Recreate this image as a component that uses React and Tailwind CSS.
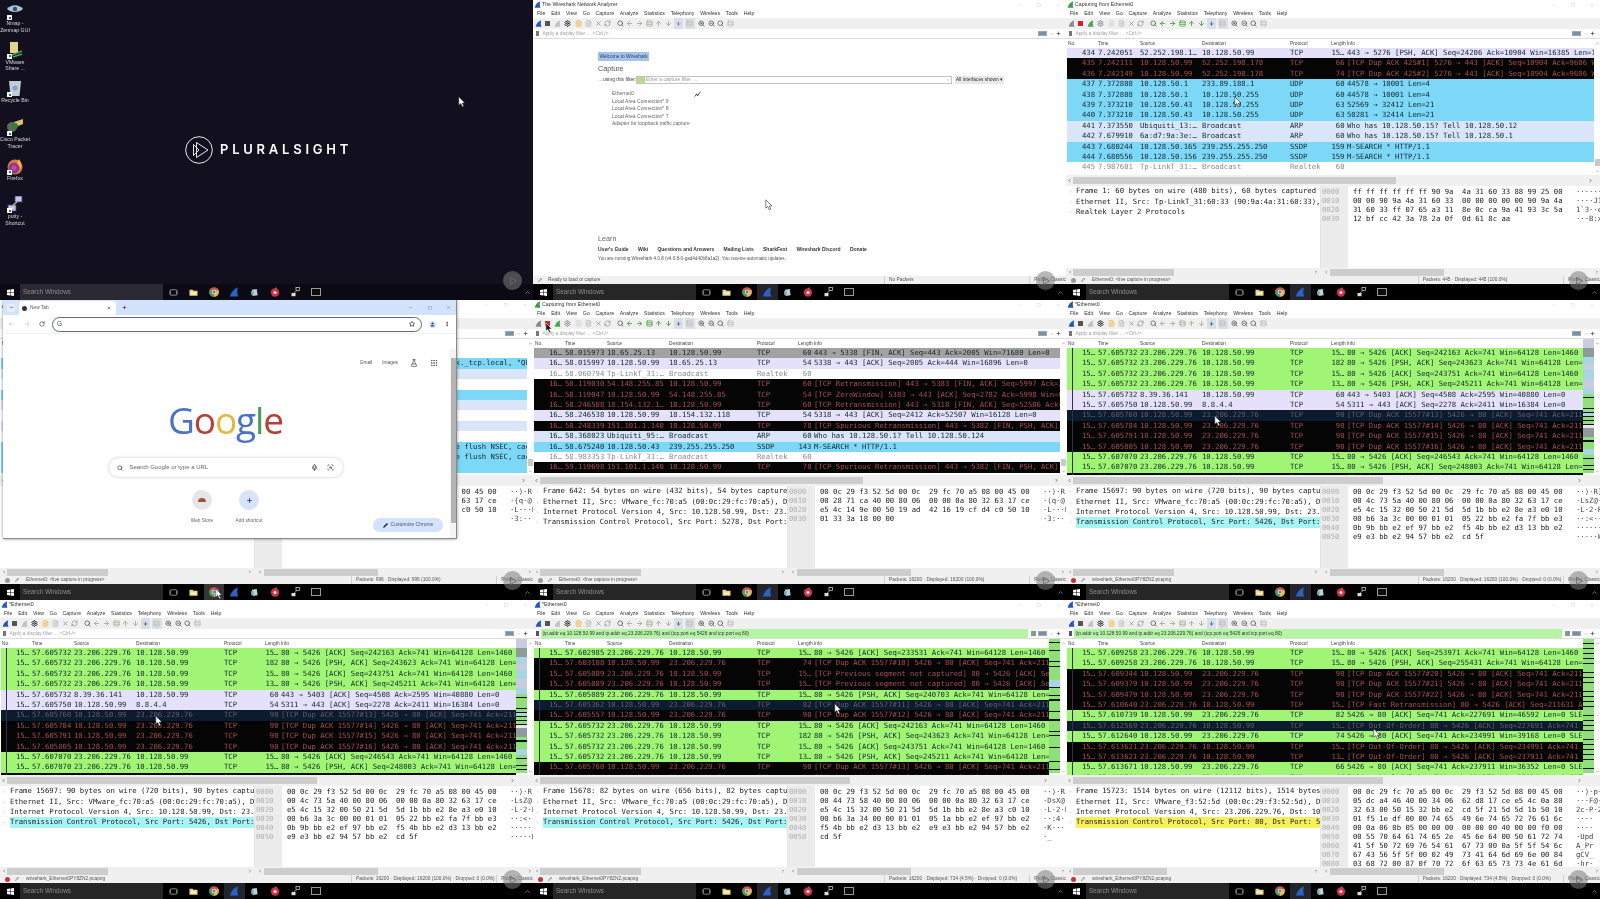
import React from 'react'
import {
  ArrowDown, ArrowLeft, ArrowRight, ArrowUp, ChevronDown, ChevronLeft, ChevronRight, ChevronUp, EllipsisVertical,
  FileText, FlaskConical, Grip, Mic, Minus, Pencil, Plus, RefreshCw, RotateCw, ScanSearch, Search, Settings,
  Square, Star, User, X, ZoomIn, ZoomOut, Rows3,
} from 'lucide-react'

const sans = "font-['Liberation_Sans',sans-serif]"
const mono = "font-['DejaVu_Sans_Mono',monospace]"

const rowStyles = {
  g: 'bg-[#a0f575] text-[#12272e]',
  k: 'bg-[#050505] text-[#a34f4f]',
  n: 'bg-[#0c1b2e] text-[#5f5f68]',
  t: 'bg-[#e5e1fa] text-[#12272e]',
  b: 'bg-[#7dd8f7] text-[#12272e]',
  a: 'bg-[#d9e5f9] text-[#12272e]',
  w: 'bg-white text-[#8a8a8a]',
  s: 'bg-[#a2a2a2] text-[#12272e]',
}

const mapStyles = {
  g: 'flex-1 bg-[#8fe07a]', k: 'h-px shrink-0 bg-[#101010]', l: 'flex-1 bg-[#c8cce0]', b: 'flex-1 bg-[#a9d4e4]', s: 'flex-1 bg-[#8f9a9a]', w: 'flex-1 bg-[#e6e6ee]',
}

const srv = '23.206.229.76'
const me = '10.128.50.99'

const liveRows = [
  ['434', '7.242051', '52.252.198.1…', me, 'TCP', '15…', '443 → 5276 [PSH, ACK] Seq=24206 Ack=10904 Win=16385 Len=1', 't'],
  ['435', '7.242111', me, '52.252.198.178', 'TCP', '66', '[TCP Dup ACK 425#1] 5276 → 443 [ACK] Seq=10904 Ack=9606 W', 'k'],
  ['436', '7.242149', me, '52.252.198.178', 'TCP', '74', '[TCP Dup ACK 425#2] 5276 → 443 [ACK] Seq=10904 Ack=9606 W', 'k'],
  ['437', '7.372808', '10.128.50.1', '233.89.188.1', 'UDP', '60', '44578 → 10001 Len=4', 'b'],
  ['438', '7.372808', '10.128.50.1', '10.128.50.255', 'UDP', '60', '44578 → 10001 Len=4', 'b'],
  ['439', '7.373210', '10.128.50.43', '10.128.50.255', 'UDP', '63', '52569 → 32412 Len=21', 'b'],
  ['440', '7.373210', '10.128.50.43', '10.128.50.255', 'UDP', '63', '50281 → 32414 Len=21', 'b'],
  ['441', '7.373550', 'Ubiquiti_13:…', 'Broadcast', 'ARP', '60', 'Who has 10.128.50.15? Tell 10.128.50.12', 'a'],
  ['442', '7.679910', '6a:d7:9a:3e:…', 'Broadcast', 'ARP', '60', 'Who has 10.128.50.15? Tell 10.128.50.1', 'a'],
  ['443', '7.680244', '10.128.50.165', '239.255.255.250', 'SSDP', '159', 'M-SEARCH * HTTP/1.1', 'b'],
  ['444', '7.680556', '10.128.50.156', '239.255.255.250', 'SSDP', '159', 'M-SEARCH * HTTP/1.1', 'b'],
  ['445', '7.987601', 'Tp-LinkT_31:…', 'Broadcast', 'Realtek', '60', '', 'w'],
]

const q = 'Standard query 0x0000 PTR _companion-link._tcp.local, "QU" question'
const r = 'Standard query response 0x0000 PTR, cache flush NSEC, cache flush A'
const behindRows = [
  ['98', '7.1', '', '', 'MDNS', '60', '', 'w'], ['99', '7.1', '', '', 'MDNS', '99', q, 'b'], ['10', '7.2', '', '', 'ARP', '60', '', 'a'],
  ['10', '7.2', '', '', 'TCP', '60', '', 'w'], ['10', '7.3', '', '', 'UDP', '63', '', 'b'], ['10', '7.4', '', '', 'ARP', '60', '', 'a'],
  ['10', '7.4', '', '', 'TCP', '60', '', 'w'], ['10', '7.5', '', '', 'ARP', '60', '', 'a'], ['10', '7.6', '', '', 'TCP', '54', '', 'w'],
  ['10', '7.7', '', '', 'MDNS', '90', r, 'b'], ['10', '7.8', '', '', 'MDNS', '90', r, 'b'], ['10', '7.9', '', '', 'MDNS', '90', '', 'b'],
]

const stopRows = [
  ['16…', '58.015973', '18.65.25.13', me, 'TCP', '60', '443 → 5338 [FIN, ACK] Seq=443 Ack=2005 Win=71680 Len=0', 's'],
  ['16…', '58.015997', me, '18.65.25.13', 'TCP', '54', '5338 → 443 [ACK] Seq=2005 Ack=444 Win=16896 Len=0', 't'],
  ['16…', '58.060794', 'Tp-LinkT_31:…', 'Broadcast', 'Realtek', '60', '', 'w'],
  ['16…', '58.119030', '54.148.255.85', me, 'TCP', '60', '[TCP Retransmission] 443 → 5383 [FIN, ACK] Seq=5997 Ack=2', 'k'],
  ['16…', '58.119047', me, '54.148.255.85', 'TCP', '54', '[TCP ZeroWindow] 5383 → 443 [ACK] Seq=2782 Ack=5998 Win=0', 'k'],
  ['16…', '58.246508', '18.154.132.1…', me, 'TCP', '60', '[TCP Retransmission] 443 → 5318 [FIN, ACK] Seq=52506 Ack=', 'k'],
  ['16…', '58.246538', me, '18.154.132.118', 'TCP', '54', '5318 → 443 [ACK] Seq=2412 Ack=52507 Win=16128 Len=0', 't'],
  ['16…', '58.248339', '151.101.1.140', me, 'TCP', '78', '[TCP Spurious Retransmission] 443 → 5382 [FIN, PSH, ACK]', 'k'],
  ['16…', '58.368023', 'Ubiquiti_95:…', 'Broadcast', 'ARP', '60', 'Who has 10.128.50.1? Tell 10.128.50.124', 'a'],
  ['16…', '58.675240', '10.128.50.43', '239.255.255.250', 'SSDP', '143', 'M-SEARCH * HTTP/1.1', 'b'],
  ['16…', '58.983353', 'Tp-LinkT_31:…', 'Broadcast', 'Realtek', '60', '', 'w'],
  ['16…', '59.119698', '151.101.1.140', me, 'TCP', '78', '[TCP Spurious Retransmission] 443 → 5382 [FIN, PSH, ACK]', 'k'],
]

const dupRows = [
  ['15…', '57.605732', srv, me, 'TCP', '15…', '80 → 5426 [ACK] Seq=242163 Ack=741 Win=64128 Len=1460', 'g'],
  ['15…', '57.605732', srv, me, 'TCP', '182', '80 → 5426 [PSH, ACK] Seq=243623 Ack=741 Win=64128 Len=128', 'g'],
  ['15…', '57.605732', srv, me, 'TCP', '15…', '80 → 5426 [ACK] Seq=243751 Ack=741 Win=64128 Len=1460', 'g'],
  ['15…', '57.605732', srv, me, 'TCP', '13…', '80 → 5426 [PSH, ACK] Seq=245211 Ack=741 Win=64128 Len=1332', 'g'],
  ['15…', '57.605732', '8.39.36.141', me, 'TCP', '60', '443 → 5403 [ACK] Seq=4508 Ack=2595 Win=40880 Len=0', 't'],
  ['15…', '57.605750', me, '8.8.4.4', 'TCP', '54', '5311 → 443 [ACK] Seq=2278 Ack=2411 Win=16384 Len=0', 't'],
  ['15…', '57.605760', me, srv, 'TCP', '90', '[TCP Dup ACK 15577#13] 5426 → 80 [ACK] Seq=741 Ack=211631', 'n'],
  ['15…', '57.605784', me, srv, 'TCP', '90', '[TCP Dup ACK 15577#14] 5426 → 80 [ACK] Seq=741 Ack=211631', 'k'],
  ['15…', '57.605791', me, srv, 'TCP', '90', '[TCP Dup ACK 15577#15] 5426 → 80 [ACK] Seq=741 Ack=211631', 'k'],
  ['15…', '57.605805', me, srv, 'TCP', '90', '[TCP Dup ACK 15577#16] 5426 → 80 [ACK] Seq=741 Ack=211631', 'k'],
  ['15…', '57.607070', srv, me, 'TCP', '15…', '80 → 5426 [ACK] Seq=246543 Ack=741 Win=64128 Len=1460', 'g'],
  ['15…', '57.607070', srv, me, 'TCP', '15…', '80 → 5426 [PSH, ACK] Seq=248003 Ack=741 Win=64128 Len=1460', 'g'],
  ['15…', '57.607080', me, srv, 'TCP', '90', '[TCP Dup ACK 15577#17] 5426 → 80 [ACK] Seq=741 Ack=211631', 'k'],
]

const filteredRows = [
  ['15…', '57.602985', srv, me, 'TCP', '15…', '80 → 5426 [ACK] Seq=233531 Ack=741 Win=64128 Len=1460', 'g'],
  ['15…', '57.603108', me, srv, 'TCP', '74', '[TCP Dup ACK 15577#10] 5426 → 80 [ACK] Seq=741 Ack=211631', 'k'],
  ['15…', '57.605089', srv, me, 'TCP', '15…', '[TCP Previous segment not captured] 80 → 5426 [ACK] Seq=2', 'k'],
  ['15…', '57.605089', srv, me, 'TCP', '15…', '[TCP Previous segment not captured] 80 → 5426 [ACK] Seq=2', 'k'],
  ['15…', '57.605089', srv, me, 'TCP', '15…', '80 → 5426 [PSH, ACK] Seq=240703 Ack=741 Win=64128 Len=1460', 'g'],
  ['15…', '57.605362', me, srv, 'TCP', '82', '[TCP Dup ACK 15577#11] 5426 → 80 [ACK] Seq=741 Ack=211631', 'n'],
  ['15…', '57.605557', me, srv, 'TCP', '90', '[TCP Dup ACK 15577#12] 5426 → 80 [ACK] Seq=741 Ack=211631', 'k'],
  ['15…', '57.605732', srv, me, 'TCP', '15…', '80 → 5426 [ACK] Seq=242163 Ack=741 Win=64128 Len=1460', 'g'],
  ['15…', '57.605732', srv, me, 'TCP', '182', '80 → 5426 [PSH, ACK] Seq=243623 Ack=741 Win=64128 Len=128', 'g'],
  ['15…', '57.605732', srv, me, 'TCP', '15…', '80 → 5426 [ACK] Seq=243751 Ack=741 Win=64128 Len=1460', 'g'],
  ['15…', '57.605732', srv, me, 'TCP', '13…', '80 → 5426 [PSH, ACK] Seq=245211 Ack=741 Win=64128 Len=1332', 'g'],
  ['15…', '57.605760', me, srv, 'TCP', '90', '[TCP Dup ACK 15577#13] 5426 → 80 [ACK] Seq=741 Ack=211631', 'k'],
  ['15…', '57.605784', me, srv, 'TCP', '90', '[TCP Dup ACK 15577#14] 5426 → 80 [ACK] Seq=741 Ack=211631', 'k'],
]

const oooRows = [
  ['15…', '57.609258', srv, me, 'TCP', '15…', '80 → 5426 [ACK] Seq=253971 Ack=741 Win=64128 Len=1460', 'g'],
  ['15…', '57.609258', srv, me, 'TCP', '15…', '80 → 5426 [PSH, ACK] Seq=255431 Ack=741 Win=64128 Len=1460', 'g'],
  ['15…', '57.609344', me, srv, 'TCP', '90', '[TCP Dup ACK 15577#20] 5426 → 80 [ACK] Seq=741 Ack=211631', 'k'],
  ['15…', '57.609379', me, srv, 'TCP', '90', '[TCP Dup ACK 15577#21] 5426 → 80 [ACK] Seq=741 Ack=211631', 'k'],
  ['15…', '57.609479', me, srv, 'TCP', '90', '[TCP Dup ACK 15577#22] 5426 → 80 [ACK] Seq=741 Ack=211631', 'k'],
  ['15…', '57.610640', srv, me, 'TCP', '15…', '[TCP Fast Retransmission] 80 → 5426 [ACK] Seq=211631 Ack=7', 'k'],
  ['15…', '57.610739', me, srv, 'TCP', '82', '5426 → 80 [ACK] Seq=741 Ack=227691 Win=46592 Len=0 SLE=2', 'g'],
  ['15…', '57.612569', srv, me, 'TCP', '15…', '[TCP Out-Of-Order] 80 → 5426 [ACK] Seq=227691 Ack=741', 'n'],
  ['15…', '57.612640', me, srv, 'TCP', '74', '5426 → 80 [ACK] Seq=741 Ack=234991 Win=39168 Len=0 SLE=2', 'g'],
  ['15…', '57.613621', srv, me, 'TCP', '15…', '[TCP Out-Of-Order] 80 → 5426 [ACK] Seq=234991 Ack=741', 'k'],
  ['15…', '57.613621', srv, me, 'TCP', '13…', '[TCP Out-Of-Order] 80 → 5426 [ACK] Seq=237911 Ack=741', 'k'],
  ['15…', '57.613671', me, srv, 'TCP', '66', '5426 → 80 [ACK] Seq=741 Ack=237911 Win=36352 Len=0 SLE=2', 'g'],
  ['15…', '57.613780', me, srv, 'TCP', '66', '5426 → 80 [ACK] Seq=741 Ack=239371 Win=35136 Len=0 SLE=2', 'g'],
]

const ip4 = 'Internet Protocol Version 4, Src: 10.128.50.99, Dst: 23.206.229.76'
const eth = 'Ethernet II, Src: VMware_fc:70:a5 (00:0c:29:fc:70:a5), Dst: VMware_f3:52:5d'

const hexLive = [
  ['ff ff ff ff ff ff 90 9a  4a 31 60 33 88 99 25 00', '······'],
  ['00 00 90 9a 4a 31 60 33  00 00 00 00 00 90 9a 4a', '····J1'],
  ['31 60 33 ff 07 65 a3 11  8e 0c ca 9a 41 93 3c 5a', '1`3··e'],
  ['12 bf cc 42 3a 78 2a 0f  0d 61 8c aa', '···B:x'],
]
const hexStop = [
  ['00 0c 29 f3 52 5d 00 0c  29 fc 70 a5 08 00 45 00', '··)·R]'],
  ['00 28 71 ca 40 00 80 06  00 00 0a 80 32 63 17 ce', '·(q·@·'],
  ['e5 4c 14 9e 00 50 19 ad  42 16 19 cf d4 c0 50 10', '·L···P'],
  ['01 33 3a 18 00 00', '·3:···'],
]
const hexDup = [
  ['00 0c 29 f3 52 5d 00 0c  29 fc 70 a5 08 00 45 00', '··)·R]'],
  ['00 4c 73 5a 40 00 80 06  00 00 0a 80 32 63 17 ce', '·LsZ@·'],
  ['e5 4c 15 32 00 50 21 5d  5d 1b bb e2 8e a3 e0 10', '·L·2·P'],
  ['00 b6 3a 3c 00 00 01 01  05 22 bb e2 fa 7f bb e3', '··:<··'],
  ['0b 9b bb e2 ef 97 bb e2  f5 4b bb e2 d3 13 bb e2', '······'],
  ['e9 e3 bb e2 94 57 bb e2  cd 5f', '·····W'],
]
const hexFiltered = [
  ['00 0c 29 f3 52 5d 00 0c  29 fc 70 a5 08 00 45 00', '··)·R]'],
  ['00 44 73 58 40 00 80 06  00 00 0a 80 32 63 17 ce', '·DsX@·'],
  ['e5 4c 15 32 00 50 21 5d  5d 1b bb e2 8e a3 c0 10', '·L·2·P'],
  ['00 b6 3a 34 00 00 01 01  05 1a bb e2 ef 97 bb e2', '··:4··'],
  ['f5 4b bb e2 d3 13 bb e2  e9 e3 bb e2 94 57 bb e2', '·K····'],
  ['cd 5f', '·_'],
]
const hexOoo = [
  ['00 0c 29 fc 70 a5 00 0c  29 f3 52 5d 08 00 45 00', '··)·p·'],
  ['05 dc a4 46 40 00 34 06  62 d8 17 ce e5 4c 0a 80', '···F@·'],
  ['32 63 00 50 15 32 bb e2  cd 5f 21 5d 5d 1b 50 10', '2c·P·2'],
  ['01 f5 1e df 00 00 74 65  49 6e 74 65 72 76 61 6c', '····'],
  ['00 0a 06 0b 05 00 00 00  00 00 00 40 00 00 f0 00', '····'],
  ['00 55 70 64 61 74 65 2e  45 6e 64 00 50 61 72 74', '·Upd'],
  ['41 5f 50 72 69 76 54 61  67 73 00 0a 5f 5f 54 6c', 'A_Pr'],
  ['67 43 56 5f 5f 00 02 49  73 41 64 6d 69 6e 00 84', 'gCV_'],
  ['03 68 72 00 87 0f 70 72  6f 63 65 73 73 4e 61 6d', '·hr·'],
]

const mapDup = 'lllsssbbllbbblllbbgkgggkgkbkgkgkwsssgkkggbbgkggkgkg'
const mapFiltered = 'gkggkgggkgkggggbbkggkgkkgggkggkkgggkgkgggkggggkggkg'
const mapOoo = 'gkgkgkgkgkggkgkgkggkgkgkgkggkgkgkgkggkgkgkgkgkggkg'

function Fin({ className = 'w-[7px] h-[7px]', color = '#2457b8' }) {
  return (
    <svg viewBox="0 0 10 10" className={className}>
      <path d="M1 9.5C2 5.5 5 1.5 9 0.5C8 3.5 8 6.5 9.2 9.5Z" fill={color} />
    </svg>
  )
}

function Cursor({ className, dark = false }) {
  return (
    <svg viewBox="0 0 10 15" className={`absolute z-30 w-[8px] h-[12px] ${className}`}>
      <path d="M1 1L1 11.5L3.5 9.4L5.3 13.5L7.2 12.7L5.4 8.8L8.6 8.6Z" fill={dark ? '#1c1c1c' : '#ffffff'} stroke={dark ? '#ffffff' : '#222222'} strokeWidth="0.7" />
    </svg>
  )
}

function Watermark({ className = 'top-[271px]' }) {
  return (
    <div className={`absolute left-[503px] z-20 w-[19px] h-[19px] rounded-full bg-[#7d7d7d]/55 flex items-center justify-center ${className}`}>
      <svg viewBox="0 0 10 10" className="w-[10px] h-[10px]">
        <path d="M2.5 1.5L8.5 5L2.5 8.5Z" fill="none" stroke="#6a6a6a" strokeWidth="0.8" />
      </svg>
    </div>
  )
}

function Taskbar({ desktop = false, active = 'shark' }) {
  const slot = 'w-[20.4px] h-full flex items-center justify-center'
  return (
    <div className={`h-[16px] shrink-0 flex items-center ${desktop ? 'bg-[#0b0a14]' : 'bg-black'}`}>
      <div className="w-[20px] flex justify-center">
        <svg viewBox="0 0 10 10" className="w-[7px] h-[7px]">
          <path d="M0 1.5L4.3 0.8V4.7H0ZM5 0.7L10 0V4.7H5ZM0 5.4H4.3V9.3L0 8.6ZM5 5.4H10V10L5 9.3Z" fill="#fff" />
        </svg>
      </div>
      <div className={`w-[143px] h-full flex items-center pl-[3px] text-[6.4px] text-[#8d8d8d] ${sans} ${desktop ? 'bg-[#2a2933]' : 'bg-[#262626]'}`}>Search Windows</div>
      <div className={slot}>
        <svg viewBox="0 0 10 10" className="w-[9px] h-[9px]"><rect x="1.5" y="2" width="7" height="6" rx="0.6" fill="none" stroke="#cfcfcf" strokeWidth="0.7" /><path d="M0.3 3V7M9.7 3V7" stroke="#cfcfcf" strokeWidth="0.5" /></svg>
      </div>
      <div className={slot}>
        <svg viewBox="0 0 10 10" className="w-[9px] h-[9px]"><path d="M0.5 2H4L5 3H9.5V8.5H0.5Z" fill="#e9d48c" /><rect x="2" y="5" width="6" height="2" fill="#fff5d0" /></svg>
      </div>
      <div className={`${slot} ${active === 'chrome' ? 'bg-[#343434]' : ''}`}>
        <svg viewBox="0 0 10 10" className="w-[10px] h-[10px]">
          <circle cx="5" cy="5" r="4.8" fill="#d9513f" />
          <path d="M5 5L9.2 2.6A4.8 4.8 0 0 1 5 9.8Z" fill="#e7b93c" />
          <path d="M5 5L5 9.8A4.8 4.8 0 0 1 0.8 2.6Z" fill="#4d9a55" />
          <circle cx="5" cy="5" r="2.3" fill="#fff" />
          <circle cx="5" cy="5" r="1.7" fill="#4f86d8" />
        </svg>
      </div>
      <div className={`${slot} ${active === 'shark' ? 'bg-[#24242c]' : ''}`}>
        <Fin className="w-[10px] h-[10px]" color="#2c62c4" />
      </div>
      <div className={slot}>
        <svg viewBox="0 0 10 10" className="w-[9px] h-[9px]"><path d="M2 2L7.5 1L8.5 8L3 9Z" fill="#b8d4da" /><path d="M1 3.5L4 3V7.5L1.5 8Z" fill="#7fa8b4" /></svg>
      </div>
      <div className={slot}>
        <svg viewBox="0 0 10 10" className="w-[10px] h-[10px]"><circle cx="5" cy="5.5" r="4.2" fill="#c9344a" /><circle cx="5" cy="5.5" r="1.6" fill="#f0d8d8" /><path d="M5 1.2L6.5 0.2V2Z" fill="#e8a050" /></svg>
      </div>
      <div className={slot}>
        <svg viewBox="0 0 10 10" className="w-[10px] h-[10px]"><rect x="5" y="0.5" width="3.5" height="3" fill="none" stroke="#ddd" strokeWidth="0.7" /><rect x="0.5" y="6" width="4" height="3.2" fill="#ddd" /><path d="M3 6L6 3.5" stroke="#c9a050" strokeWidth="0.8" /></svg>
      </div>
      <div className={slot}>
        <div className="w-[10px] h-[8px] bg-[#0c0c0c] border border-[#9a9a9a]" />
      </div>
      <div className="flex-1 flex justify-end pr-[2px]">
        <ChevronUp className="w-[7px] h-[7px] text-[#bdbdbd]" />
      </div>
    </div>
  )
}

function Menu() {
  return (
    <div className={`h-[9px] shrink-0 flex items-center pl-[4px] gap-[5.8px] text-[5.2px] text-[#333] bg-white ${sans}`}>
      {['File', 'Edit', 'View', 'Go', 'Capture', 'Analyze', 'Statistics', 'Telephony', 'Wireless', 'Tools', 'Help'].map((m) => (
        <span key={m}>{m}</span>
      ))}
    </div>
  )
}

function TitleBar({ title, live }) {
  return (
    <div className={`h-[9px] shrink-0 flex items-center bg-white text-[5.2px] text-[#333] ${sans}`}>
      <Fin className="w-[7px] h-[7px] ml-[1px] mr-[1px]" color={live ? '#3f9a4e' : '#2457b8'} />
      <span className="flex-1">{title}</span>
      <div className="flex items-center gap-[15px] pr-[6px] text-[#c4c4c4]">
        <Minus className="w-[4px] h-[4px]" />
        <Square className="w-[4px] h-[4px]" />
        <X className="w-[4px] h-[4px]" />
      </div>
    </div>
  )
}

function Toolbar({ mode }) {
  const live = mode === 'live'
  const idle = mode === 'idle'
  const nav = live ? 'text-[#4aa23c]' : 'text-[#a9a995]'
  const slot = 'w-[9.6px] h-full flex items-center justify-center'
  const ic = 'w-[7px] h-[7px]'
  return (
    <div className="h-[11px] shrink-0 flex items-center pl-[0.5px] bg-[#f0f0f0]">
      <div className={slot}><Fin color={live ? '#8a8a8a' : '#2457b8'} /></div>
      <div className={slot}><div className={`w-[5px] h-[5px] ${live ? 'bg-[#d3232a]' : 'bg-[#555]'}`} /></div>
      <div className={slot}><Fin color={live ? '#46a84c' : '#c2c2c2'} /></div>
      <div className={slot}><Settings className={`${ic} ${live ? 'text-[#8a8a8a]' : 'text-[#222]'}`} strokeWidth={3} /></div>
      <div className="w-[2.3px]" />
      <div className={slot}><FileText className={`${ic} ${live ? 'text-[#d8d8d8]' : 'text-[#f0c056]'}`} strokeWidth={3} /></div>
      <div className={slot}><FileText className={`${ic} text-[#9a9a9a]`} strokeWidth={1.5} /></div>
      <div className={slot}><X className={`${ic} text-[#777]`} strokeWidth={2} /></div>
      <div className={slot}><RefreshCw className={`${ic} text-[#888]`} strokeWidth={2} /></div>
      <div className="w-[3px]" />
      <div className={slot}><Search className={`${ic} text-[#555]`} strokeWidth={2.5} /></div>
      <div className={slot}><ArrowLeft className={`${ic} ${nav}`} strokeWidth={3} /></div>
      <div className={slot}><ArrowRight className={`${ic} ${nav}`} strokeWidth={3} /></div>
      <div className={slot}><Rows3 className={`${ic} ${nav}`} strokeWidth={2.5} /></div>
      <div className={slot}><ArrowUp className={`${ic} ${nav}`} strokeWidth={3} /></div>
      <div className={slot}><ArrowDown className={`${ic} ${nav}`} strokeWidth={3} /></div>
      <div className="w-[0.6px]" />
      <div className={`${slot} bg-[#d5dfee]`}><ArrowDown className={`w-[5px] h-[5px] ${idle ? 'text-[#666]' : 'text-[#333]'}`} strokeWidth={3} /></div>
      <div className="w-[1.8px]" />
      <div className={`${slot} bg-[#dcdfe4]`}><Rows3 className={`${ic} text-[#aaa]`} strokeWidth={1.5} /></div>
      <div className="w-[2px]" />
      <div className={slot}><ZoomIn className={`${ic} text-[#555]`} strokeWidth={2.5} /></div>
      <div className={slot}><ZoomOut className={`${ic} text-[#555]`} strokeWidth={2.5} /></div>
      <div className={slot}><Search className={`${ic} text-[#555]`} strokeWidth={2.5} /></div>
      <div className={slot}><Rows3 className={`${ic} text-[#999]`} strokeWidth={1.5} /></div>
    </div>
  )
}

function FilterBar({ filter }) {
  return (
    <div className={`h-[10px] shrink-0 flex items-center border-b border-[#dedede] bg-white text-[4.8px] ${sans}`}>
      <div className="w-[8px] flex justify-center">
        <div className={`w-[3px] h-[5px] ${filter ? 'bg-[#556]' : 'bg-[#777]'}`} />
      </div>
      <span className={`h-full flex items-center flex-1 pl-[1.5px] ${filter ? 'bg-[#b4f4a2] text-[#334]' : 'text-[#a0a0a0]'}`}>
        {filter || 'Apply a display filter … <Ctrl-/>'}
      </span>
      <div className="w-[38px] h-full flex items-center pl-[1px]">
        <div className="w-[9px] flex justify-center">
          {filter && <div className="w-[5px] h-[5px] bg-[#8a9a8a]" />}
        </div>
        <div className="w-[9px] h-[5px] bg-[#7d8fa5] border border-[#9aa]" />
        <ChevronDown className="w-[4px] h-[4px] ml-[3px] text-[#555]" />
        <Plus className="w-[5px] h-[5px] ml-[2px] text-[#333]" strokeWidth={3} />
      </div>
    </div>
  )
}

const listGrid = 'grid grid-cols-[15px_16px_42px_62px_88px_41px_13.5px_minmax(0,1fr)]'

function PacketRow({ row, mark }) {
  const [no, time, src, dst, proto, len, info, kind] = row
  return (
    <div className={`${listGrid} h-[10.4px] shrink-0 items-center text-[7.25px] leading-[10.4px] whitespace-nowrap overflow-hidden ${rowStyles[kind]}`}>
      <span className="h-full">{mark && <span className="block ml-[5px] w-px h-full bg-[#334]" />}</span>
      <span className="overflow-hidden">{no}</span>
      <span className="overflow-hidden">{time}</span>
      <span className="overflow-hidden">{src}</span>
      <span className="overflow-hidden">{dst}</span>
      <span className="overflow-hidden">{proto}</span>
      <span className="text-right">{len}</span>
      <span className="pl-[2.5px] overflow-hidden">{info}</span>
    </div>
  )
}

function PacketList({ rows, minimap, mark, thumb }) {
  const head = `${listGrid} h-[9px] items-center text-[4.8px] text-[#444] bg-white ${sans}`
  return (
    <div className="h-[136px] shrink-0 flex bg-white">
      <div className="flex-1 min-w-0 flex flex-col pl-[1px]">
        <div className={head}>
          <span className="col-span-2 pl-[1px]">No.</span>
          <span>Time</span>
          <span>Source</span>
          <span>Destination</span>
          <span>Protocol</span>
          <span className="text-right">Length</span>
          <span className="pl-[2.5px]">Info</span>
        </div>
        <div className={`flex-1 flex flex-col overflow-hidden ${mono}`}>
          {rows.map((row, i) => (
            <PacketRow key={i} row={row} mark={mark} />
          ))}
        </div>
      </div>
      {minimap && (
        <div className="w-[11px] shrink-0 flex flex-col pb-[2px]">
          {minimap.split('').map((c, i) => (
            <div key={i} className={mapStyles[c]} />
          ))}
        </div>
      )}
      <div className="w-[6px] shrink-0 flex flex-col items-center">
        <ChevronUp className="w-[5px] h-[5px] mt-[2px] text-[#555]" />
        <div className="flex-1" />
        {thumb && <div className="w-[5px] h-[7px] mb-[3px] bg-[#c9c9c9]" />}
        <ChevronDown className="w-[5px] h-[5px] mb-[1px] text-[#555]" />
      </div>
    </div>
  )
}

function HScroll({ thumb, end }) {
  return (
    <div className="h-[11px] shrink-0 flex items-center bg-[#f0f0f0]">
      <ChevronLeft className="w-[5px] h-[5px] ml-[1px] mr-[1px] text-[#444]" strokeWidth={3} />
      <div className={`h-[7px] bg-[#cdcdcd] ${thumb}`} />
      <div className="flex-1" />
      <ChevronRight className={`w-[5px] h-[5px] text-[#444] ${end}`} strokeWidth={3} />
    </div>
  )
}

function Details({ lines, hl, hex }) {
  return (
    <div className={`flex-1 min-h-0 flex bg-white text-[7.25px] ${mono}`}>
      <div className="w-[255px] shrink-0 pt-[0.5px] overflow-hidden border-r border-[#e4e4e4]">
        {lines.map((t, i) => (
          <div key={i} className="h-[10.35px] flex items-center whitespace-nowrap">
            <ChevronRight className="w-[3px] h-[3px] ml-[3px] mr-[4px] shrink-0 text-[#888]" strokeWidth={3} />
            <span className={`flex-1 overflow-hidden ${i === hl?.i ? hl.color : 'text-[#222]'} `}>{t}</span>
          </div>
        ))}
      </div>
      <div className="flex-1 flex min-w-0 overflow-hidden">
        <div className="w-[27px] shrink-0 bg-[#ececec] pl-[1px] pt-[0.5px] text-[#b0b0b0]">
          {hex.map((_, i) => (
            <div key={i} className="h-[9.1px] leading-[9.1px]">{`00${i}0`}</div>
          ))}
        </div>
        <div className="w-[228px] shrink-0 pl-[5px] pt-[0.5px] text-[#222] whitespace-pre">
          {hex.map((h, i) => (
            <div key={i} className="h-[9.1px] leading-[9.1px]">{h[0]}</div>
          ))}
        </div>
        <div className="flex-1 pt-[0.5px] text-[#444] whitespace-pre">
          {hex.map((h, i) => (
            <div key={i} className="h-[9.1px] leading-[9.1px]">{h[1]}</div>
          ))}
        </div>
      </div>
    </div>
  )
}

function BottomScroll({ thumb = 'w-[101px]' }) {
  return (
    <div className="h-[8px] shrink-0 flex items-center bg-[#f0f0f0] text-[#444]">
      <div className="w-[255px] flex items-center">
        <ChevronLeft className="w-[4px] h-[4px] ml-[2px] mr-[1px]" strokeWidth={3} />
        <div className={`h-[7px] bg-[#cdcdcd] ${thumb}`} />
        <div className="flex-1" />
        <ChevronRight className="w-[4px] h-[4px] mr-[3px]" strokeWidth={3} />
      </div>
      <ChevronLeft className="w-[4px] h-[4px] ml-[3px] mr-[1.5px]" strokeWidth={3} />
      <div className="h-[7px] w-[114px] bg-[#cdcdcd]" />
      <div className="flex-1" />
      <ChevronRight className="w-[4px] h-[4px] mr-[1px]" strokeWidth={3} />
    </div>
  )
}

function StatusBar({ left, mid, dot = 'bg-[#9a9a9a]', noDot = false }) {
  return (
    <div className={`h-[8px] shrink-0 flex items-center bg-[#f0f0f0] text-[4.8px] text-[#555] whitespace-nowrap ${sans}`}>
      <div className="w-[354px] flex items-center border-r border-[#d0d0d0]">
        {!noDot && <div className={`w-[5px] h-[5px] ml-[5px] rounded-full ${dot}`} />}
        <Pencil className="w-[4px] h-[4px] ml-[5px] text-[#666]" strokeWidth={3} />
        <span className={noDot ? 'ml-[6px]' : 'ml-[7px]'}>{left}</span>
      </div>
      <div className="w-[146px] pl-[4px] border-r border-[#d0d0d0]">{mid}</div>
      <div className="pl-[4px]">Profile: Classic</div>
    </div>
  )
}

function Wireshark({ title, mode = 'stopped', filter, rows, minimap, mark, thumb, lines, hl, hex, left, mid, red, active, wmClass, cursor, hEnd = 'mr-[7px]', hThumb = 'w-[323px]', bottomThumb, children }) {
  return (
    <div className="relative flex flex-col overflow-hidden bg-white">
      <TitleBar title={title} live={mode === 'live'} />
      <Menu />
      <Toolbar mode={mode} />
      <FilterBar filter={filter} />
      <PacketList rows={rows} minimap={minimap} mark={mark} thumb={thumb} />
      <HScroll thumb={hThumb} end={hEnd} />
      <Details lines={lines} hl={hl} hex={hex} />
      <BottomScroll thumb={bottomThumb} />
      <StatusBar left={left} mid={mid} dot={red ? 'bg-[#c8323a]' : undefined} />
      <Taskbar active={active} />
      <Watermark className={wmClass} />
      {cursor}
      {children}
    </div>
  )
}

function DesktopIcon({ lines, children }) {
  return (
    <div className="h-[38.7px] w-[30px] flex flex-col items-center">
      <div className="relative h-[17px] w-[18px]">
        {children}
        <div className="absolute left-[1px] bottom-0 w-[5px] h-[5px] bg-white flex items-center justify-center">
          <div className="w-[2px] h-[2px] bg-[#2b5fb3]" />
        </div>
      </div>
      {lines.map((l) => (
        <span key={l} className={`text-[5.2px] leading-[6.5px] text-[#d8d8d8] whitespace-nowrap ${sans}`}>{l}</span>
      ))}
    </div>
  )
}

function Desktop() {
  return (
    <div className="relative flex flex-col overflow-hidden bg-[#12101f]">
      <div className="flex-1 relative">
        <div className="flex flex-col pt-[3px]">
          <DesktopIcon lines={['Nmap -', 'Zenmap GUI']}>
            <svg viewBox="0 0 18 17" className="w-[18px] h-[17px]"><path d="M1 6C5 1 13 1 17 6C13 10 5 10 1 6Z" fill="#a9c4d4" /><circle cx="9" cy="6" r="2.2" fill="#2f4f68" /></svg>
          </DesktopIcon>
          <DesktopIcon lines={['VMware', 'Share ...']}>
            <svg viewBox="0 0 18 17" className="w-[18px] h-[17px]"><rect x="4" y="0" width="8" height="11" fill="#e4d488" /><path d="M6 13L16 9M7 15L16 12" stroke="#4fa05a" strokeWidth="1.5" /></svg>
          </DesktopIcon>
          <DesktopIcon lines={['Recycle Bin']}>
            <svg viewBox="0 0 18 17" className="w-[18px] h-[17px]"><path d="M3 1H15L13.5 16H4.5Z" fill="#c4ccd4" /><circle cx="9" cy="8" r="2.5" fill="#7fa4c8" /></svg>
          </DesktopIcon>
          <DesktopIcon lines={['Cisco Packet', 'Tracer']}>
            <svg viewBox="0 0 18 17" className="w-[18px] h-[17px]"><path d="M8 3L17 0V5L10 8Z" fill="#d8c070" /><circle cx="6" cy="8" r="5" fill="#5a6a58" /><circle cx="9" cy="7" r="3" fill="#3e7a3e" /></svg>
          </DesktopIcon>
          <DesktopIcon lines={['Firefox']}>
            <svg viewBox="0 0 18 17" className="w-[18px] h-[17px]"><circle cx="9" cy="9" r="7.5" fill="#e07a3a" /><circle cx="8" cy="10" r="5.5" fill="#8a3a9a" /><circle cx="8" cy="10" r="2.4" fill="#d04a88" /><path d="M13 1C15 4 16 7 15 11L11 5Z" fill="#f5b53c" /></svg>
          </DesktopIcon>
          <DesktopIcon lines={['putty -', 'Shortcut']}>
            <svg viewBox="0 0 18 17" className="w-[18px] h-[17px]"><rect x="9" y="0" width="7" height="6" fill="#c4c8e0" stroke="#39408a" strokeWidth="0.8" /><rect x="2" y="9" width="8" height="6" fill="#c4c8e0" stroke="#39408a" strokeWidth="0.8" /><path d="M7 9L11 6" stroke="#e0c860" strokeWidth="1.2" /></svg>
          </DesktopIcon>
        </div>
        {/* centred logo */}
        <div className="absolute left-[185px] top-[135.5px] flex items-center gap-[7px]">
          <svg viewBox="0 0 28 28" className="w-[28px] h-[28px]">
            <circle cx="14" cy="14" r="13.3" fill="none" stroke="#fff" strokeWidth="0.9" />
            <path d="M8.5 8.5V19.5L14 14ZM11.5 6.5V21.5L23 14Z" fill="none" stroke="#fff" strokeWidth="0.9" strokeLinejoin="round" />
          </svg>
          <span className="text-[13px] leading-none font-semibold tracking-[0.29em] text-white font-['Inter',sans-serif]">PLURALSIGHT</span>
        </div>
        <Cursor className="left-[458px] top-[96px]" />
      </div>
      <Taskbar desktop active="none" />
      <Watermark />
    </div>
  )
}

function Welcome() {
  const links = ["User's Guide", 'Wiki', 'Questions and Answers', 'Mailing Lists', 'SharkFest', 'Wireshark Discord', 'Donate']
  return (
    <div className="relative flex flex-col overflow-hidden bg-white">
      <TitleBar title="The Wireshark Network Analyzer" />
      <Menu />
      <Toolbar mode="idle" />
      <FilterBar />
      <div className={`flex-1 min-h-0 flex flex-col pl-[65px] pt-[13px] text-[#444] ${sans}`}>
        <div className="w-[51px] h-[9px] flex items-center justify-center bg-[#a5c3ea] text-[4.8px] text-[#30435c]">Welcome to Wireshark</div>
        <div className="mt-[3px] text-[7.2px] leading-[9px] text-[#555]">Capture</div>
        <div className="mt-[2px] h-[9px] flex items-center text-[5px]">
          <span className="w-[38px] whitespace-nowrap">…using this filter:</span>
          <div className="w-[316px] h-[8px] flex items-center border border-[#c4c4c4] bg-white">
            <div className="w-[8px] h-full bg-[#b4dc8c]" />
            <span className="pl-[1px] text-[#999] flex-1">Enter a capture filter …</span>
            <ChevronDown className="w-[4px] h-[4px] mr-[1px] text-[#555]" />
          </div>
          <div className="ml-[3px] w-[49px] h-[8px] flex items-center justify-center bg-[#e8e8e8] text-[4.8px] text-[#333] whitespace-nowrap">All interfaces shown ▾</div>
        </div>
        <div className="mt-[6px] pl-[14px] text-[5px] leading-[7.5px] text-[#666]">
          <div>Ethernet0</div>
          <div>Local Area Connection* 9</div>
          <div>Local Area Connection* 8</div>
          <div>Local Area Connection* 7</div>
          <div>Adapter for loopback traffic capture</div>
        </div>
        <div className="flex-1" />
        <div className="text-[7.2px] leading-[9px] text-[#666]">Learn</div>
        <div className="mt-[3px] flex items-center gap-[3.8px] text-[5px] font-bold text-[#333]">
          {links.map((l, i) => (
            <React.Fragment key={l}>
              {i > 0 && <span className="text-[#999] font-normal">·</span>}
              <span>{l}</span>
            </React.Fragment>
          ))}
        </div>
        <div className="mt-[3px] mb-[13px] text-[4.6px] text-[#555]">You are running Wireshark 4.0.8 (v4.0.8-0-gad4d40b8a1a2). You receive automatic updates.</div>
      </div>
      <StatusBar left="Ready to load or capture" mid="No Packets" noDot />
      <Taskbar />
      <Watermark />
      <Cursor className="left-[232px] top-[199px]" />
      <svg viewBox="0 0 10 10" className="absolute left-[161px] top-[91px] w-[7px] h-[7px]">
        <path d="M1 8L4 4L5 7L9 1" fill="none" stroke="#222" strokeWidth="1.1" />
      </svg>
    </div>
  )
}

function ChromeWindow() {
  return (
    <div className={`absolute left-[3px] top-0 z-10 w-[454px] h-[239px] flex flex-col bg-white border-r border-b border-[#8a8a8a] shadow-[0_0_3px_rgba(0,0,0,0.45)] ${sans}`}>
      <div className="h-[15px] shrink-0 flex items-end bg-[#d3e3fd]">
        <div className="w-[16px] self-center flex justify-center">
          <div className="w-[8px] h-[8px] rounded-[2px] bg-[#e8effb] flex items-center justify-center">
            <ChevronDown className="w-[5px] h-[5px] text-[#333]" strokeWidth={3} />
          </div>
        </div>
        <div className="w-[97px] h-[14px] flex items-center bg-white rounded-t-[4px] pl-[3px] text-[4.8px] text-[#555]">
          <div className="w-[5px] h-[5px] rounded-full bg-[#333] mr-[3px]" />
          <span className="flex-1">New Tab</span>
          <X className="w-[4px] h-[4px] mr-[5px] text-[#222]" strokeWidth={3} />
        </div>
        <Plus className="self-center w-[5px] h-[5px] ml-[6px] text-[#333]" strokeWidth={3} />
        <div className="flex-1" />
        <div className="self-center flex items-center gap-[14.5px] pr-[5px] text-[#777]">
          <Minus className="w-[5px] h-[5px]" />
          <Square className="w-[4px] h-[4px]" />
          <X className="w-[5px] h-[5px]" />
        </div>
      </div>
      <div className="h-[18px] shrink-0 flex items-center">
        <ArrowLeft className="w-[6px] h-[6px] ml-[5px] text-[#c0c0c0]" strokeWidth={2.5} />
        <ArrowRight className="w-[6px] h-[6px] ml-[9.5px] text-[#c0c0c0]" strokeWidth={2.5} />
        <RotateCw className="w-[6px] h-[6px] ml-[9px] text-[#444]" strokeWidth={2.5} />
        <div className="ml-[7.5px] w-[370px] h-[15px] flex items-center rounded-full border-[1.5px] border-[#5f6b75] pl-[4px] pr-[6px]">
          <span className="flex-1 text-[6.5px] text-[#444]">G</span>
          <Star className="w-[6px] h-[6px] text-[#333]" strokeWidth={3} />
        </div>
        <div className="ml-[6.5px] w-[7px] h-[7px] rounded-full bg-[#d3e3fd] flex items-center justify-center">
          <User className="w-[5px] h-[5px] text-[#2c4a80]" fill="#2c4a80" />
        </div>
        <EllipsisVertical className="w-[6px] h-[6px] ml-[8px] text-[#444]" strokeWidth={3} />
      </div>
      <div className="relative flex-1 min-h-0 flex flex-col items-center border-t border-[#f2f2f2] pr-[8px]">
        <div className="self-end flex items-center h-[8px] mt-[25px] pr-[10px] text-[4.8px] text-[#555]">
          <span>Gmail</span>
          <span className="ml-[10px]">Images</span>
          <FlaskConical className="w-[8px] h-[8px] ml-[12px] text-[#444]" />
          <Grip className="w-[8px] h-[8px] ml-[12px] text-[#444]" />
        </div>
        <div className="mt-[29px] h-[46px] flex items-center text-[37px] leading-none font-medium tracking-[-0.03em] font-['Open_Sans',sans-serif]">
          <span className="text-[#4a73c4]">G</span>
          <span className="text-[#b5403a]">o</span>
          <span className="text-[#e0b942]">o</span>
          <span className="text-[#4a73c4]">g</span>
          <span className="text-[#4f9a5a]">l</span>
          <span className="text-[#b5403a]">e</span>
        </div>
        <div className="mt-[16px] w-[234px] h-[19px] flex items-center rounded-full bg-white shadow-[0_0_3px_rgba(0,0,0,0.25)] pl-[8px] pr-[9px] text-[6px] text-[#666]">
          <Search className="w-[6px] h-[6px] text-[#555]" strokeWidth={3} />
          <span className="flex-1 pl-[7px]">Search Google or type a URL</span>
          <Mic className="w-[7px] h-[7px] text-[#555]" strokeWidth={3} />
          <ScanSearch className="w-[7px] h-[7px] ml-[8.5px] text-[#555]" strokeWidth={2.5} />
        </div>
        <div className="mt-[13px] flex gap-[17px] text-[4.8px] text-[#666]">
          <div className="w-[30px] flex flex-col items-center gap-[7px]">
            <div className="w-[20px] h-[20px] rounded-full bg-[#e6e6e6] flex items-center justify-center">
              <div className="w-[8px] h-[4px] rounded-t-full bg-[#a0523d]" />
            </div>
            <span className="whitespace-nowrap">Web Store</span>
          </div>
          <div className="w-[30px] flex flex-col items-center gap-[7px]">
            <div className="w-[20px] h-[20px] rounded-full bg-[#d8e2f8] flex items-center justify-center">
              <Plus className="w-[7px] h-[7px] text-[#2c4a80]" strokeWidth={3} />
            </div>
            <span className="whitespace-nowrap">Add shortcut</span>
          </div>
        </div>
        {/* over the page, like Chrome's own button */}
        <div className="absolute left-[370px] top-[184px] w-[70px] h-[14px] rounded-full bg-[#d3e3fd] flex items-center justify-center gap-[3px] text-[5px] text-[#556]">
          <Pencil className="w-[5px] h-[5px] text-[#1f2f4f]" fill="#1f2f4f" />
          <span>Customize Chrome</span>
        </div>
        <div className="absolute right-0 top-[15px] bottom-0 w-[6px] flex flex-col items-center bg-[#f4f4f4]">
          <div className="mt-[9px] w-[5px] h-[165px] bg-[#b4b4b4]" />
        </div>
      </div>
    </div>
  )
}

const dupLines = ['Frame 15697: 90 bytes on wire (720 bits), 90 bytes captured (720 bits)', eth, ip4, 'Transmission Control Protocol, Src Port: 5426, Dst Port: 80, Seq: 741']
const hlBlue = { i: 3, color: 'bg-[#a5f5f7] text-[#222]' }
const hlYellow = { i: 3, color: 'bg-[#f6f05a] text-[#222]' }
const file = 'wireshark_Ethernet0PY8ZN2.pcapng'

export default function App() {
  return (
    <div className="w-[1600px] h-[899px] overflow-hidden grid grid-cols-[533px_533px_534px] grid-rows-[300px_300px_299px] bg-black blur-[0.35px]">
      <Desktop />
      <Welcome />
      <Wireshark
        title="Capturing from Ethernet0"
        mode="live"
        rows={liveRows}
        thumb
        lines={['Frame 1: 60 bytes on wire (480 bits), 60 bytes captured (480 bits)', 'Ethernet II, Src: Tp-LinkT_31:60:33 (90:9a:4a:31:60:33), Dst:', 'Realtek Layer 2 Protocols']}
        hex={hexLive}
        left="Ethernet0: <live capture in progress>"
        mid="Packets: 445 · Displayed: 445 (100.0%)"
        cursor={<Cursor className="left-[168px] top-[96px]" />}
      />
      <Wireshark
        title="Capturing from Ethernet0"
        mode="live"
        rows={behindRows}
        thumb
        lines={['Frame 1: 60 bytes', 'Ethernet II', 'Internet Protocol Version 4']}
        hex={[
          ['00 0c 29 f3 52 5d 00 0c  29 fc 70 a5 08 00 45 00', '··)·R]'],
          ['00 3d 71 ca 40 00 80 06  00 00 0a 80 32 63 17 ce', '·{q·@·'],
          ['e5 4c 14 9e 00 50 19 ad  42 16 19 cf d4 c0 50 10', '·L···P'],
          ['01 33 3a 18 00 00', '·3:···'],
        ]}
        left="Ethernet0: <live capture in progress>"
        mid="Packets: 996 · Displayed: 996 (100.0%)"
        active="chrome"
        cursor={<Cursor className="left-[215px] top-[288px]" />}
      >
        <ChromeWindow />
      </Wireshark>
      <Wireshark
        title="Capturing from Ethernet0"
        mode="live"
        rows={stopRows}
        thumb
        lines={['Frame 642: 54 bytes on wire (432 bits), 54 bytes captured (432 bits)', eth, 'Internet Protocol Version 4, Src: 10.128.50.99, Dst: 23.206.229.76', 'Transmission Control Protocol, Src Port: 5278, Dst Port: 443, Seq: 1']}
        hex={hexStop}
        left="Ethernet0: <live capture in progress>"
        mid="Packets: 16200 · Displayed: 16200 (100.0%)"
        cursor={<Cursor dark className="left-[12px] top-[22px]" />}
      />
      <Wireshark
        title="*Ethernet0"
        rows={dupRows}
        minimap={mapDup}
        mark
        lines={dupLines}
        hl={hlBlue}
        hex={hexDup}
        left={file}
        mid="Packets: 16200 · Displayed: 16200 (100.0%) · Dropped: 0 (0.0%)"
        red
        hThumb="w-[310px]"
        hEnd="mr-[18px]"
        cursor={<Cursor className="left-[148px] top-[115px]" />}
      />
      <Wireshark
        title="*Ethernet0"
        rows={dupRows}
        minimap={mapDup}
        mark
        lines={dupLines}
        hl={hlBlue}
        hex={hexDup}
        left={file}
        mid="Packets: 16200 · Displayed: 16200 (100.0%) · Dropped: 0 (0.0%)"
        red
        hThumb="w-[310px]"
        hEnd="mr-[18px]"
        wmClass="top-[270px]"
        cursor={<Cursor className="left-[155px] top-[115px]" />}
      />
      <Wireshark
        title="*Ethernet0"
        filter="(ip.addr eq 10.128.50.99 and ip.addr eq 23.206.229.76) and (tcp.port eq 5426 and tcp.port eq 80)"
        rows={filteredRows}
        minimap={mapFiltered}
        mark
        lines={['Frame 15678: 82 bytes on wire (656 bits), 82 bytes captured (656 bits)', eth, ip4, 'Transmission Control Protocol, Src Port: 5426, Dst Port: 80, Seq: 741']}
        hl={hlBlue}
        hex={hexFiltered}
        left={file}
        mid="Packets: 16200 · Displayed: 734 (4.5%) · Dropped: 0 (0.0%)"
        red
        hThumb="w-[310px]"
        hEnd="mr-[18px]"
        wmClass="top-[270px]"
        cursor={<Cursor className="left-[301px] top-[103px]" />}
      />
      <Wireshark
        title="*Ethernet0"
        filter="(ip.addr eq 10.128.50.99 and ip.addr eq 23.206.229.76) and (tcp.port eq 5426 and tcp.port eq 80)"
        rows={oooRows}
        minimap={mapOoo}
        mark
        lines={['Frame 15723: 1514 bytes on wire (12112 bits), 1514 bytes captured', 'Ethernet II, Src: VMware_f3:52:5d (00:0c:29:f3:52:5d), Dst: VMware_fc', 'Internet Protocol Version 4, Src: 23.206.229.76, Dst: 10.128.50.99', 'Transmission Control Protocol, Src Port: 80, Dst Port: 5426, Seq: 1']}
        hl={hlYellow}
        hex={hexOoo}
        left={file}
        mid="Packets: 16200 · Displayed: 734 (4.5%) · Dropped: 0 (0.0%)"
        red
        hThumb="w-[310px]"
        hEnd="mr-[18px]"
        bottomThumb="w-[94px]"
        wmClass="top-[270px]"
        cursor={<Cursor className="left-[307px] top-[128px]" />}
      />
    </div>
  )
}
